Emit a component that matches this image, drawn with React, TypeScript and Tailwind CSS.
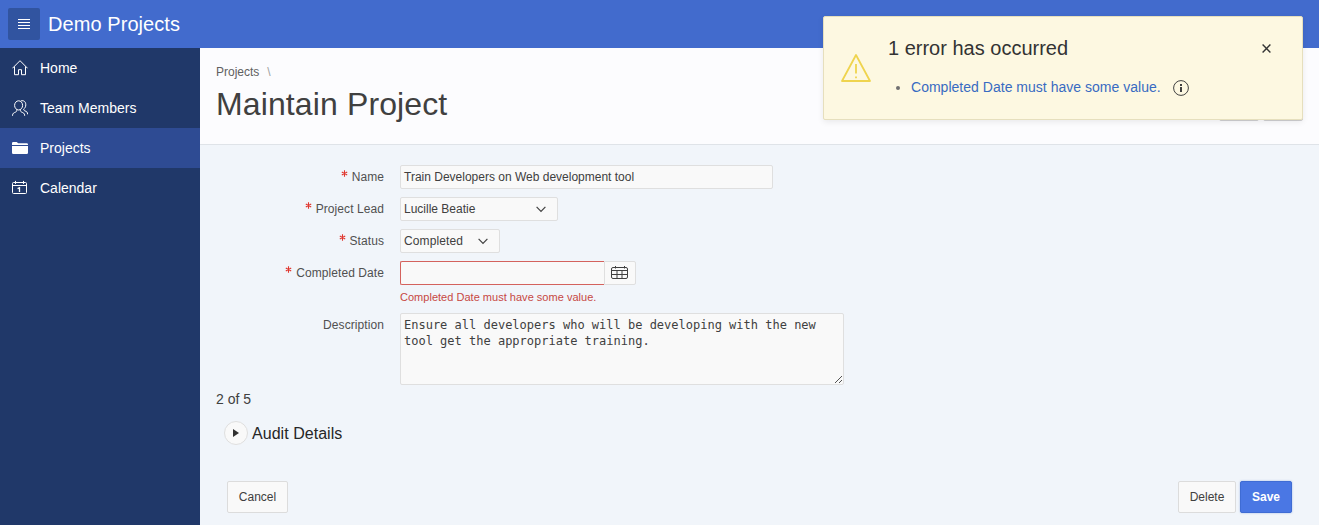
import type { ReactNode } from "react";

function HomeIcon() {
  return (
    <svg width="16" height="16" viewBox="0 0 16 16" fill="none" stroke="currentColor">
      <path d="M.4 8.300 8 .7l7.600 7.600M2.500 6.500v8.200h4v-5h3v5h4V6.500" />
    </svg>
  );
}

function TeamIcon() {
  return (
    <svg width="16" height="16" viewBox="0 0 16 16" fill="none" stroke="currentColor">
      <ellipse cx="6.6" cy="5.4" rx="4" ry="4.6" />
      <path d="M.5 15.800c0-2.800 1.600-3 3.100-3.700 1.100-.5 1.200-1.300 1.200-2.600M8.400 9.500c0 1.300.1 2.100 1.200 2.600 1.500.7 3.100.9 3.100 3.700M8.900.9c3-.9 4.900 1 4.900 3.900 0 2.200-1 3.400-2.100 4.200 0 1.200.4 1.500 1.300 1.900 1.500.6 2.600 1 2.600 3.400" />
    </svg>
  );
}

function FolderIcon() {
  return (
    <svg width="16" height="16" viewBox="0 0 16 16" fill="currentColor">
      <path d="M0 3.300Q0 2 1.300 2h3.400L6.200 3.200h8.500Q16 3.200 16 4.500V5H0zM0 6h16v6.700q0 1.300-1.300 1.300H1.300Q0 14 0 12.700z" />
    </svg>
  );
}

function DayIcon() {
  return (
    <svg width="16" height="16" viewBox="0 0 16 16" fill="none" stroke="currentColor">
      <path d="M1.500 2.500h12q1 0 1 1v9q0 1-1 1h-12q-1 0-1-1v-9q0-1 1-1zM.5 5.500h14M3.500 .9v3M11.500 .9v3" />
      <path d="M5.600 8.600l1.900-.9V12" strokeWidth="1.300" />
    </svg>
  );
}

function Chevron() {
  return (
    <svg className="mt-px" width="10" height="7" viewBox="0 0 10 7" fill="none" stroke="#404040" strokeWidth="1.2">
      <path d="M.6.9 5 5.300 9.400.9" />
    </svg>
  );
}

function RequiredMark() {
  return (
    <svg className="-mt-[7px] mr-[4px]" width="7" height="7" viewBox="0 0 7 7" stroke="#e0362e" strokeWidth="1.100">
      <path d="M3.500.3v6.400M.8 2l5.400 3M6.200 2 .8 5" />
    </svg>
  );
}

const navItems: { label: string; icon: ReactNode; active?: boolean }[] = [
  { label: "Home", icon: <HomeIcon /> },
  { label: "Team Members", icon: <TeamIcon /> },
  { label: "Projects", icon: <FolderIcon />, active: true },
  { label: "Calendar", icon: <DayIcon /> },
];

function Field({ label, required, children }: { label: string; required?: boolean; children: ReactNode }) {
  return (
    <div className="flex items-start">
      <div className="flex h-6 w-[168px] shrink-0 items-center justify-end text-xs tracking-[0.08px] text-[#505050]">
        {required && <RequiredMark />}
        {label}
      </div>
      <div className="ml-4">{children}</div>
    </div>
  );
}

const control = "flex items-center rounded-[2px] border border-[#dfdfdf] bg-[#f9f9f9] text-xs text-[#404040]";

export default function App() {
  return (
    <div className="flex h-[525px] w-full flex-col overflow-hidden bg-[#f1f5fa] font-['Liberation_Sans',sans-serif] text-[#404040]">
      <header className="flex h-12 shrink-0 items-center bg-[#426bcd] pl-2 text-white">
        <button className="flex size-8 items-center justify-center rounded-[2px] bg-[#3154a0]" aria-label="Menu">
          <svg width="12" height="10" viewBox="0 0 12 10" stroke="white">
            <path d="M0 .5h12M0 3.500h12M0 6.500h12M0 9.500h12" />
          </svg>
        </button>
        <span className="ml-2 text-xl leading-8 tracking-[0.07px]">Demo Projects</span>
      </header>

      <div className="flex min-h-0 flex-1">
        <nav className="w-[200px] shrink-0 bg-[#203869] text-sm text-white">
          {navItems.map((item) => (
            <div key={item.label} className={item.active ? "flex h-10 items-center gap-3 bg-[#2e4b93] pl-3" : "flex h-10 items-center gap-3 pl-3"}>
              {item.icon}
              <span>{item.label}</span>
            </div>
          ))}
        </nav>

        <main className="flex min-w-0 flex-1 flex-col">
          <div className="flex h-[97px] shrink-0 justify-between border-b border-[#dfe3e8] bg-[#fcfcfe] px-4 pt-4">
            <div>
              <div className="flex h-4 items-center gap-[8px] text-xs text-[#606060]">
                <span>Projects</span>
                <span className="text-[#a0a0a0]">\</span>
              </div>
              <h1 className="mt-1 text-[32px] leading-10 tracking-[0.12px]">Maintain Project</h1>
            </div>
            <div className="mt-[25px] flex gap-1">
              <span className="h-8 w-10 rounded-[2px] border border-[#d0d0d2] bg-[#f9f9f9]" />
              <span className="h-8 w-10 rounded-[2px] border border-[#d0d0d2] bg-[#f9f9f9]" />
            </div>
          </div>

          <form className="flex flex-col gap-2 pl-4 pt-5">
            <Field label="Name" required>
              <div className={`${control} h-6 w-[373px] pl-[3px]`}>Train Developers on Web development tool</div>
            </Field>
            <Field label="Project Lead" required>
              <div className={`${control} h-6 w-[158px] justify-between pl-[3px] pr-[11px]`}>
                Lucille Beatie
                <Chevron />
              </div>
            </Field>
            <Field label="Status" required>
              <div className={`${control} h-6 w-[100px] justify-between pl-[3px] pr-[11px]`}>
                <span className="tracking-[0.1px]">Completed</span>
                <Chevron />
              </div>
            </Field>
            <Field label="Completed Date" required>
              <div className="flex h-6">
                <div className="w-[204px] rounded-l-[2px] border border-r-0 border-[#d4625d] bg-[#f9f9f9]" />
                <div className="flex w-8 items-center justify-center rounded-r-[2px] border border-[#dfdfdf] bg-[#f9f9f9]">
                  <svg className="-ml-px -mt-px" width="17" height="13" viewBox="0 0 17 13" fill="none" stroke="#404040">
                    <rect x=".5" y="1.500" width="16" height="11" rx="1.500" />
                    <path d="M.5 4.500h16M.5 8.500h16M6 4.500v8M11 4.500v8M4.500 0v2.500M13.500 0v2.500" />
                  </svg>
                </div>
              </div>
              <div className="mt-1 h-4 text-[11px] leading-4 tracking-[0.02px] text-[#c74843]">Completed Date must have some value.</div>
            </Field>
            <Field label="Description">
              <div className="relative h-[72px] w-[444px] rounded-[2px] border border-[#dfdfdf] bg-[#f9f9f9] px-[3px] py-[3px] font-['DejaVu_Sans_Mono',monospace] text-xs leading-4">
                Ensure all developers who will be developing with the new
                <br />
                tool get the appropriate training.
                <svg className="absolute bottom-px right-px" width="7" height="7" viewBox="0 0 7 7" stroke="#404040" strokeWidth=".9">
                  <path d="M0 7 7 0M4 7l3-3" />
                </svg>
              </div>
            </Field>
          </form>

          <div className="mt-1 pl-4 text-sm leading-5">2 of 5</div>
          <div className="mt-3 flex h-6 items-center gap-1 pl-6">
            <span className="flex size-6 items-center justify-center rounded-full border border-[#dfdfdf] bg-[#f9f9f9]">
              <svg width="6" height="8" viewBox="0 0 6 8" fill="#303030">
                <path d="M0 0 6 4 0 8z" />
              </svg>
            </span>
            <span className="pt-0.5 text-base leading-6 tracking-[0.04px] text-[#262626]">Audit Details</span>
          </div>

          <div className="mt-9 flex h-8 items-stretch pl-[27px] pr-[27px] text-xs">
            <button className="w-[61px] rounded-[2px] border border-[#dcdcdc] bg-[#f9f9f9]">Cancel</button>
            <button className="ml-auto w-[58px] rounded-[2px] border border-[#dcdcdc] bg-[#f9f9f9]">Delete</button>
            <button className="ml-1 w-[52px] rounded-[2px] border border-[#3f6cd4] bg-[#4a77e4] font-bold text-white shadow-[0_0_2px_rgba(63,108,212,0.5)]">Save</button>
          </div>
        </main>
      </div>

      <aside className="absolute right-4 top-4 flex h-[104px] w-[480px] rounded-[2px] border border-[#e6dfbd] bg-[#fdf8e1] shadow-[0_2px_6px_rgba(0,0,0,0.08)]">
        <svg className="ml-[17px] mt-[37px] shrink-0" width="30" height="28" viewBox="0 0 30 28" fill="none" stroke="#efd44e" strokeWidth="1.8" strokeLinejoin="round">
          <path d="M15 1 29 27H1zM15 10v9.500M15 22.500v1.800" />
        </svg>
        <div className="ml-[17px] pt-[19px]">
          <h2 className="text-xl leading-6 text-[#333]">1 error has occurred</h2>
          <div className="mt-4 flex h-5 items-center text-sm">
            <span className="ml-2 mt-[3px] size-1 rounded-full bg-[#707070]" />
            <span className="ml-[11px] mt-px tracking-[0.02px] text-[#386bc2]">Completed Date must have some value.</span>
            <svg className="ml-3 mt-[3px]" width="16" height="16" viewBox="0 0 16 16" fill="none" stroke="#404040">
              <circle cx="8" cy="8" r="7.400" />
              <path d="M8 4v2M8 7v5" strokeWidth="2" />
            </svg>
          </div>
        </div>
        <svg className="absolute right-[31px] top-[27px]" width="9" height="9" viewBox="0 0 9 9" stroke="#333" strokeWidth="1.400">
          <path d="m.6.6 7.800 7.800M8.400.6.6 8.400" />
        </svg>
      </aside>
    </div>
  );
}
